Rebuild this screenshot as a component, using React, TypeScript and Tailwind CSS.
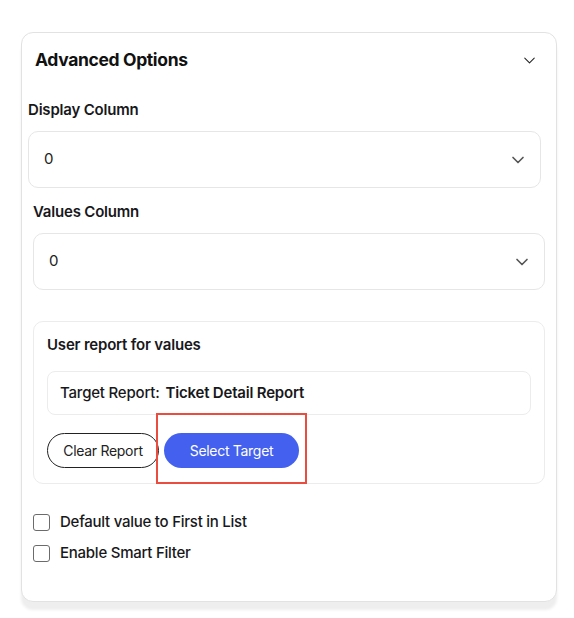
import React from "react";

function Chevron({ className, strokeWidth = 1.5 }: { className?: string; strokeWidth?: number }) {
  return (
    <svg viewBox="0 0 24 24" fill="none" stroke="currentColor" strokeWidth={strokeWidth} strokeLinecap="round" strokeLinejoin="round" className={className}>
      <path d="M6 9l6 6 6-6" />
    </svg>
  );
}

function SelectBox({ value }: { value: string }) {
  return (
    <div className="flex h-[57px] items-center justify-between rounded-[10px] border border-[#e6e6e6] bg-white pl-[15px] pr-[12px]">
      <span className="text-[15px] text-[#222]">{value}</span>
      <Chevron className="h-[20px] w-[20px] text-[#555]" strokeWidth={2} />
    </div>
  );
}

function Check({ label }: { label: string }) {
  return (
    <label className="flex h-[19px] items-center gap-[10px]">
      <span className="h-[17px] w-[17px] rounded-[3px] border border-[#6b6b6b] bg-white" />
      <span className="text-[15px] font-medium tracking-[-0.25px] text-[#18181b]">{label}</span>
    </label>
  );
}

export default function App() {
  return (
    <div className="min-h-[618px] w-[574px] bg-white pt-[32px]" style={{ fontFamily: "Inter, 'Noto Sans', sans-serif" }}>
      <div className="ml-[21px] h-[570px] w-[536px] rounded-[12px] border border-[#e2e2e2] bg-white shadow-[0_8px_3px_0_#eeeeee]">
        <div className="flex h-[55px] items-center justify-between pl-[13px] pr-[17px]">
          <span className="text-[17.5px] font-bold tracking-[-0.35px] text-[#111]">Advanced Options</span>
          <Chevron className="h-[19px] w-[19px] text-[#222]" strokeWidth={1.3} />
        </div>

        <div className="mt-[12px] pl-[6px] pr-[15px]">
          <div className="text-[15px] font-semibold leading-[20px] tracking-[-0.2px] text-[#18181b]">Display Column</div>
          <div className="mt-[11px]">
            <SelectBox value="0" />
          </div>
        </div>

        <div className="mt-[14px] pl-[11px] pr-[11px]">
          <div className="text-[15px] font-semibold leading-[20px] tracking-[-0.2px] text-[#18181b]">Values Column</div>
          <div className="mt-[11px]">
            <SelectBox value="0" />
          </div>

          <div className="mt-[31px] h-[163px] rounded-[10px] border border-[#ececec] px-[13px] pt-[13px]">
            <div className="text-[15px] font-semibold leading-[20px] tracking-[-0.2px] text-[#18181b]">User report for values</div>
            <div className="mt-[16px] flex h-[44px] items-center rounded-[8px] border border-[#ececec] pl-[12px] text-[15px] tracking-[-0.2px] text-[#18181b]">
              <span className="font-medium">Target Report:</span>
              <span className="ml-[6px] font-semibold">Ticket Detail Report</span>
            </div>
            <div className="mt-[18px] flex items-center gap-[5px]">
              <button className="flex h-[35px] w-[112px] items-center justify-center rounded-full border border-[#222] bg-white text-[14px] tracking-[-0.3px] text-[#222]">
                Clear Report
              </button>
              <div className="relative">
                <button className="flex h-[35px] w-[135px] items-center justify-center rounded-full bg-[#4361ee] text-[14px] tracking-[-0.3px] text-white">
                  Select Target
                </button>
                <div className="pointer-events-none absolute left-[-8px] right-[-8px] top-[-20px] bottom-[-16px] border-2 border-[#ea4c3f]" />
              </div>
            </div>
          </div>

          <div className="mt-[29px] flex flex-col gap-[12px]">
            <Check label="Default value to First in List" />
            <Check label="Enable Smart Filter" />
          </div>
        </div>
      </div>
    </div>
  );
}
